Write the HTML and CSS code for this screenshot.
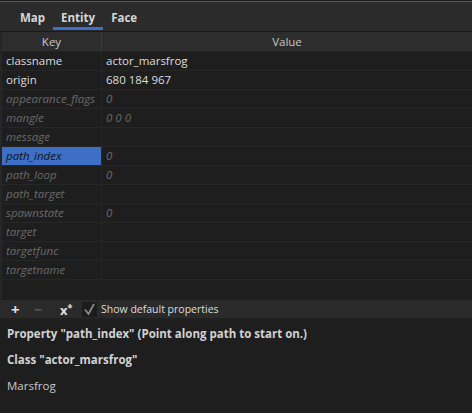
FILE: index.html
```html
<!DOCTYPE html>
<html lang="en">
<head>
    <meta charset="UTF-8">
    <title>Entity Properties</title>
    <link rel="stylesheet" href="styles.css">
</head>
<body>

<div class="panel">
    <div class="tabs">
        <div class="tab">Map</div>
        <div class="tab active">Entity</div>
        <div class="tab">Face</div>
    </div>

    <div class="props">
        <div class="row head">
            <div class="key">Key</div>
            <div class="val">Value</div>
        </div>
        <div class="row"><div class="key">classname</div><div class="val">actor_marsfrog</div></div>
        <div class="row"><div class="key">origin</div><div class="val">680 184 967</div></div>
        <div class="row dflt"><div class="key">appearance_flags</div><div class="val">0</div></div>
        <div class="row dflt"><div class="key">mangle</div><div class="val">0 0 0</div></div>
        <div class="row dflt"><div class="key">message</div><div class="val"></div></div>
        <div class="row dflt selected"><div class="key">path_index</div><div class="val">0</div></div>
        <div class="row dflt"><div class="key">path_loop</div><div class="val">0</div></div>
        <div class="row dflt"><div class="key">path_target</div><div class="val"></div></div>
        <div class="row dflt"><div class="key">spawnstate</div><div class="val">0</div></div>
        <div class="row dflt"><div class="key">target</div><div class="val"></div></div>
        <div class="row dflt"><div class="key">targetfunc</div><div class="val"></div></div>
        <div class="row dflt"><div class="key">targetname</div><div class="val"></div></div>
    </div>

    <div class="toolbar">
        <span class="tool add">+</span>
        <span class="tool del">&minus;</span>
        <span class="tool clear">x<sup>*</sup></span>
        <label class="check">
            <span class="box">
                <svg width="15" height="15" viewBox="0 0 15 15">
                    <polyline points="3,7.5 6.5,12 12,2" fill="none" stroke="#8c8c8c" stroke-width="1.7"/>
                </svg>
            </span>
            Show default properties
        </label>
    </div>

    <div class="info">
        <p class="strong">Property "path_index" (Point along path to start on.)</p>
        <p class="strong">Class "actor_marsfrog"</p>
        <p>Marsfrog</p>
    </div>
</div>

</body>
</html>
```

FILE: styles.css
```css
* {
    margin: 0;
    padding: 0;
    box-sizing: border-box;
}
body {
    font-family: 'Open Sans', 'Noto Sans', sans-serif;
    font-size: 11.5px;
    background-color: #1e1e1e;
    color: #dcdcdc;
    width: 472px;
    height: 413px;
    overflow: hidden;
}
.panel {
    border-top: 1px solid #1e1e1e;
    height: 100%;
    display: flex;
    flex-direction: column;
}
.tabs {
    display: flex;
    height: 31px;
    padding-left: 12px;
    background-color: #2b2b2b;
    border-top: 1px solid #545454;
    border-bottom: 1px solid #1a1a1a;
}
.tab {
    padding: 6px 8px 0;
    line-height: 19px;
    height: 28px;
    font-weight: 700;
    font-size: 11.5px;
    color: #d6d6d6;
    border-bottom: 3px solid transparent;
}
.tab.active {
    border-bottom-color: #3d6fc7;
}
.props {
    height: 267px;
    background-color: #1e1e1e;
    border-left: 2px solid #262626;
}
.row {
    display: flex;
    height: 19px;
    line-height: 18px;
    border-bottom: 1px solid #262626;
}
.row .key {
    width: 100px;
    padding-left: 4px;
    border-right: 1px solid #262626;
    white-space: nowrap;
    overflow: hidden;
}
.row .val {
    flex: 1;
    padding-left: 4px;
}
.row.head {
    height: 20px;
    line-height: 19px;
    background-color: #2d2d2d;
    color: #c8c8c8;
    border-bottom: 1px solid #232323;
}
.row.head .key,
.row.head .val {
    text-align: center;
    padding: 0;
    border-right-color: #3a3a3a;
}
.dflt {
    font-style: italic;
    color: #6a6a6a;
}
.selected .key {
    background-color: #3d6fc7;
    color: #141414;
}
.toolbar {
    display: flex;
    align-items: center;
    height: 21px;
    margin-top: 1px;
    padding-left: 11px;
    background-color: #2a2a2a;
    border-bottom: 3px solid #202020;
}
.tool {
    font-weight: 700;
    line-height: 18px;
    color: #e0e0e0;
}
.tool.add {
    width: 23px;
    font-size: 15px;
}
.tool.del {
    width: 26px;
    font-size: 15px;
    color: #555;
}
.tool.clear {
    width: 22px;
    font-size: 13px;
}
.tool sup {
    font-size: 9px;
    vertical-align: 4px;
}
.check {
    display: flex;
    align-items: center;
    gap: 4px;
    font-size: 10.5px;
    color: #dcdcdc;
}
.box {
    width: 15px;
    height: 15px;
    background-color: #1c1c1c;
}
.box svg {
    display: block;
}
.info {
    flex: 1;
    padding: 0 7px;
    background-color: #1e1e1e;
}
.info p {
    line-height: 26px;
    color: #c8c8c8;
}
.info p.strong {
    font-weight: 700;
    font-size: 11.5px;
    color: #d2d2d2;
}
```
